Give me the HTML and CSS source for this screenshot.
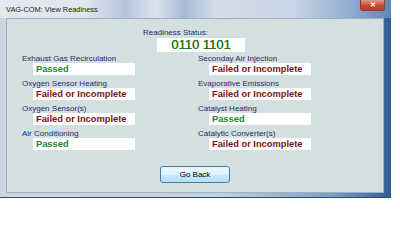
FILE: index.html
```html
<!DOCTYPE html>
<html lang="en">
<head>
  <meta charset="UTF-8">
  <title>VAG-COM: View Readiness</title>
  <link rel="stylesheet" href="styles.css">
</head>
<body>

  <div class="window">
    <!-- Title bar -->
    <div class="titlebar">
      <span class="title">VAG-COM: View Readiness</span>
      <span class="close">&#10005;</span>
    </div>

    <!-- Client area -->
    <div class="client">
      <div class="status">
        <div class="status-label">Readiness Status:</div>
        <div class="status-box">0110 1101</div>
      </div>

      <div class="grid">
        <div class="item">
          <div class="label">Exhaust Gas Recirculation</div>
          <div class="value ok">Passed</div>
        </div>
        <div class="item">
          <div class="label">Seconday Air Injection</div>
          <div class="value bad">Failed or Incomplete</div>
        </div>
        <div class="item">
          <div class="label">Oxygen Sensor Heating</div>
          <div class="value bad">Failed or Incomplete</div>
        </div>
        <div class="item">
          <div class="label">Evaporative Emissions</div>
          <div class="value bad">Failed or Incomplete</div>
        </div>
        <div class="item">
          <div class="label">Oxygen Sensor(s)</div>
          <div class="value bad">Failed or Incomplete</div>
        </div>
        <div class="item">
          <div class="label">Catalyst Heating</div>
          <div class="value ok">Passed</div>
        </div>
        <div class="item">
          <div class="label">Air Conditioning</div>
          <div class="value ok">Passed</div>
        </div>
        <div class="item">
          <div class="label">Catalytic Converter(s)</div>
          <div class="value bad">Failed or Incomplete</div>
        </div>
      </div>

      <button class="back">Go Back</button>
    </div>
  </div>

</body>
</html>
```

FILE: styles.css
```css
* { box-sizing: border-box; margin: 0; padding: 0; }

body {
  font-family: "Liberation Sans", Arial, sans-serif;
  background: #fff;
  width: 400px;
  height: 250px;
}

/* — WINDOW FRAME ————————————— */
.window {
  width: 391px;
  height: 198px;
  display: flex;
  flex-direction: column;
  padding: 0 7px 4px 6px;
  background: linear-gradient(90deg, #cdd7e0 0%, #c6d2dd 55%, #7d9fc6 85%, #3f6c9f 97%, #2f5a8c 100%);
  border-bottom: 1px solid #2c4f7a;
}

.titlebar {
  height: 18px;
  margin: 0 -7px 0 -6px;
  padding-left: 6px;
  display: flex;
  align-items: center;
  position: relative;
  background: linear-gradient(90deg, #e4e9ee 0%, #dfe6ed 22%, #b5c5da 32%, #dbe4ee 40%, #a7bad4 47%, #d2dde9 55%, #c9d6e6 75%, #8eaad0 90%, #5d86b9 100%);
}
.title {
  font-size: 7.4px;
  color: #1a1a1a;
}
.close {
  position: absolute;
  top: 0;
  left: 360px;
  width: 25px;
  height: 11px;
  border: 1px solid #8b3b30;
  border-top: none;
  border-radius: 0 0 3px 3px;
  background: linear-gradient(#e09a8a, #c4442f 60%, #b6402e);
  color: #fff;
  font-size: 7px;
  font-weight: bold;
  text-align: center;
  line-height: 10px;
}

/* — CLIENT AREA ————————————— */
.client {
  flex: 1;
  background: #d4e0e0;
  border: 1px solid #9cb0c0;
  padding-top: 9px;
  display: flex;
  flex-direction: column;
}

.status { margin-left: 136px; }
.status-label {
  font-size: 8px;
  line-height: 10px;
  color: #1c2a6e;
}
.status-box {
  width: 88px;
  height: 14px;
  margin-left: 14px;
  background: #fff;
  color: #247417;
  font-size: 13px;
  line-height: 14px;
  text-align: center;
  text-shadow: 0.3px 0 0 #247417;
}

.grid {
  margin-top: 2px;
  padding-left: 15px;
  display: grid;
  grid-template-columns: 176px 176px;
  row-gap: 4px;
}
.label {
  font-size: 8px;
  line-height: 9px;
  color: #1c2a6e;
}
.value {
  width: 102px;
  height: 12px;
  margin-left: 11px;
  padding-left: 3px;
  background: #fff;
  font-size: 9.3px;
  font-weight: bold;
  line-height: 12px;
}
.ok { color: #23892a; }
.bad { color: #7c1212; }

.back {
  width: 70px;
  height: 17px;
  margin: 16px auto 0;
  border: 1px solid #3c7fb1;
  border-radius: 3px;
  background: linear-gradient(#eef8fd, #dff2fc 50%, #c8eafd 51%, #b5def5);
  font-family: "Liberation Sans", Arial, sans-serif;
  font-size: 8px;
  color: #000;
}
```
